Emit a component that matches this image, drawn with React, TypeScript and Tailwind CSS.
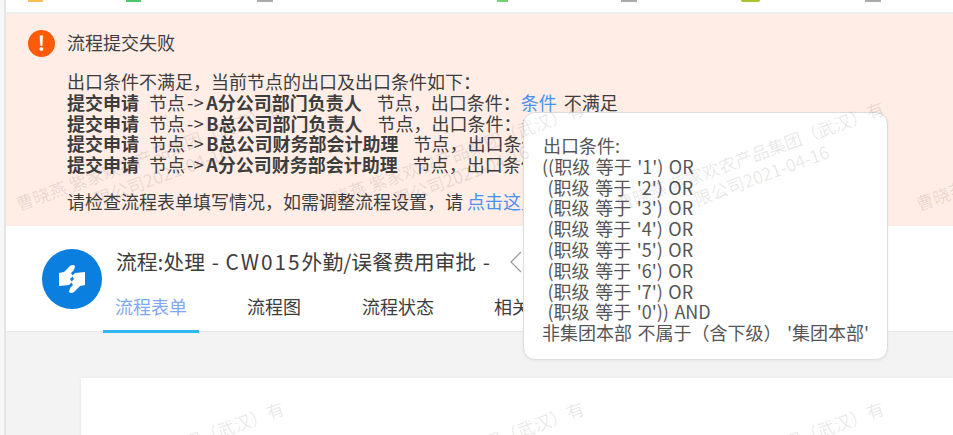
const lines = ["A分公司部门负责人", "B总公司部门负责人", "B总公司财务部会计助理", "A分公司财务部会计助理"];

const conditions = [
  "((职级 等于 '1') OR",
  " (职级 等于 '2') OR",
  " (职级 等于 '3') OR",
  " (职级 等于 '4') OR",
  " (职级 等于 '5') OR",
  " (职级 等于 '6') OR",
  " (职级 等于 '7') OR",
  " (职级 等于 '0')) AND",
];

const marks = [
  [20, -86], [320, -86], [620, -86], [920, -86],
  [20, 214], [320, 214], [620, 214], [920, 214],
  [-280, 514], [20, 514], [320, 514], [620, 514], [920, 514],
];

export default function App() {
  return (
    <div className="relative h-[435px] w-[953px] overflow-hidden bg-[#f8f8f8] pl-[4px] font-['Noto_Sans_CJK_SC','Noto_Sans',sans-serif] text-[18px] leading-[20.8px] text-[#3d3d3d]">
      <div className="h-full border-l-2 border-[#e6e6e6] bg-[#f3f3f3]">
        <div className="flex h-[12px] bg-white">
          <span className="ml-[22px] h-[2px] w-[15px] bg-[#ffc14d]" />
          <span className="ml-[83px] h-[2px] w-[15px] bg-[#4cc76a]" />
          <span className="ml-[116px] h-[2px] w-[16px] bg-[#aaaaaa]" />
          <span className="ml-[224px] h-[2px] w-[11px] bg-[#6fd46f]" />
          <span className="ml-[113px] h-[2px] w-[16px] bg-[#aaaaaa]" />
          <span className="ml-[104px] h-[2px] w-[19px] rounded-b-full bg-[#a6c52d]" />
          <span className="ml-[105px] h-[2px] w-[16px] bg-[#aaaaaa]" />
        </div>
        <div className="h-[2px] bg-[#eeeeee]" />

        <div className="h-[212px] bg-[#ffede6] pl-[22px] pt-[16px]">
          <div className="flex h-[27px] items-center gap-[12px]">
            <span className="flex h-[27px] w-[27px] items-center justify-center rounded-full bg-[#ff5a0a] text-[20px] font-bold text-white">!</span>
            <span className="-mt-[2px]">流程提交失败</span>
          </div>
          <div className="ml-[39px] mt-[14px] whitespace-nowrap">
            <div>出口条件不满足，当前节点的出口及出口条件如下：</div>
            {lines.map((name) => (
              <div key={name}>
                <b className="mr-[10px] font-bold">提交申请</b>
                节点<span className="mx-[2px] tracking-[0.5px]">-&gt;</span><b className="mr-[15px] font-bold">{name}</b>
                节点，出口条件：<span className="mr-[3px] text-[#4a90f0]">条件</span> 不满足
              </div>
            ))}
            <div className="mt-[16px]">
              请检查流程表单填写情况，如需调整流程设置，请 <span className="text-[#4a90f0]">点击这里</span>
            </div>
          </div>
        </div>

        <div className="flex h-[106px] border-b border-[#e8e8e8] bg-white pl-[36px]">
          <div className="mt-[23px] flex h-[60px] w-[60px] shrink-0 items-center justify-center rounded-full bg-[#0a7fe0]">
            <svg viewBox="0 0 28 30" className="h-[30px] w-[28px]" fill="#ffffff">
              <path d="M1 9 L6 8 L12 2 Q15 0 17 2 L16 6 L13 9 L15 12 L12 15 L14 18 L11 21 L1 22 Z" />
              <path d="M1 9 L6 8 L12 2 Q15 0 17 2 L16 6 L13 9 L15 12 L12 15 L14 18 L11 21 L1 22 Z" transform="rotate(180 14 15)" />
            </svg>
          </div>
          <div className="ml-[1px] whitespace-nowrap">
            <div className="ml-[13px] mt-[25px] flex h-[21px] items-center text-[20.8px]">
              <span className="[word-spacing:2px]">
                流程:处理 - <span className="tracking-[2px]">CW015</span>外勤/误餐费用审批 -
              </span>
              <svg viewBox="0 0 14 22" className="ml-[19px] h-[22px] w-[14px]" fill="none" stroke="#999999" strokeWidth="1.2">
                <path d="M12 1 L2 11 L12 21" />
              </svg>
            </div>
            <div className="mt-[24px] flex h-[36px] items-start">
              <span className="h-[37px] w-[96px] border-b-[3px] border-[#2db7f5] pl-[12px] text-[#7fa8f5]">流程表单</span>
              <span className="ml-[48px]">流程图</span>
              <span className="ml-[61px]">流程状态</span>
              <span className="ml-[60px]">相关</span>
            </div>
          </div>
        </div>

        <div className="ml-[75px] mt-[46px] h-[80px] bg-white shadow-[0_0_4px_rgba(0,0,0,0.06)]" />
      </div>

      <div className="absolute left-[523px] top-[112px] h-[248px] w-[365px] rounded-[12px] border border-[#dddddd] bg-white pl-[18px] pt-[22px] text-[#555555] shadow-[0_1px_3px_rgba(0,0,0,0.06)] [word-spacing:1.5px]">
        <div className="pl-[1px]">出口条件:</div>
        {conditions.map((c) => (
          <div key={c} className="whitespace-pre">{c}</div>
        ))}
        <div className="whitespace-pre">非集团本部 不属于（含下级） '集团本部'</div>
      </div>

      {marks.map(([x, y]) => (
        <div
          key={`${x}-${y}`}
          className="pointer-events-none absolute h-0 w-0 origin-top-left -rotate-[20deg] whitespace-nowrap text-[17.5px] leading-[20px] text-black/10"
          style={{ left: x, top: y }}
        >
          <div className="absolute bottom-0 left-0">曹晓燕 紫家欢农产品集团（武汉）有</div>
          <div className="absolute left-[75px] top-[2px]">限公司2021-04-16</div>
        </div>
      ))}
    </div>
  );
}
